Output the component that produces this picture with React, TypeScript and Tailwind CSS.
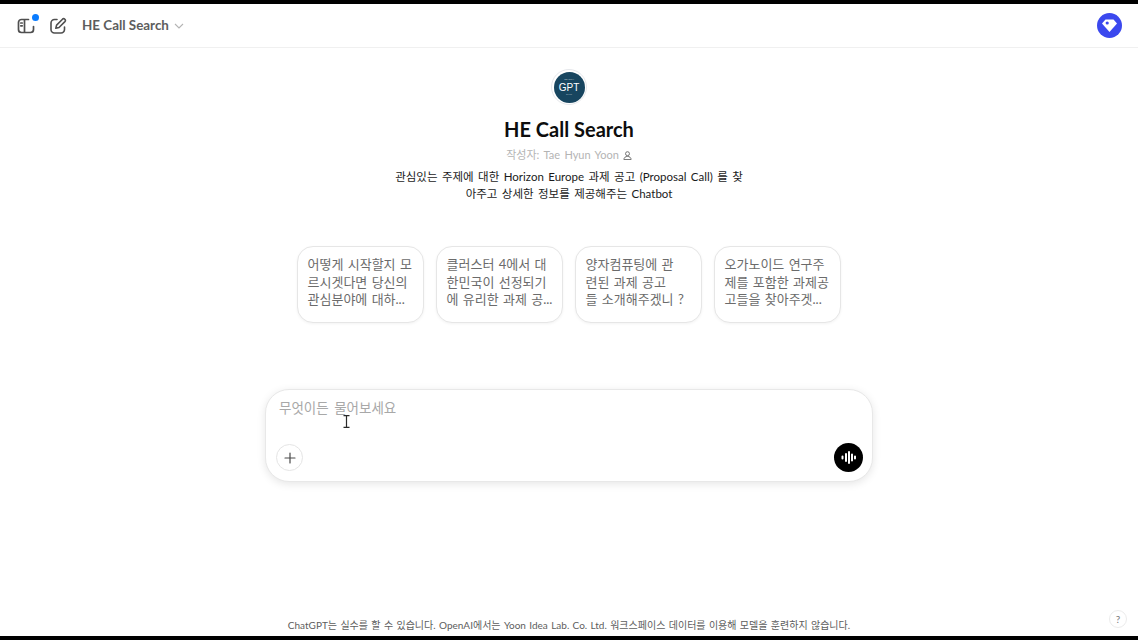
import React from "react";

const font = { fontFamily: 'Lato, "Noto Sans CJK KR", "Noto Sans", sans-serif' };

function SidebarIcon() {
  return (
    <svg width="20" height="20" viewBox="0 0 20 20" fill="none" stroke="#4f4f4f" strokeWidth="1.7" className="block">
      <path d="M12.500 3.500H5.500a3 3 0 0 0-3 3v7a3 3 0 0 0 3 3h9a3 3 0 0 0 3-3v-3" strokeLinecap="round" />
      <path d="M8.500 3.500v13" />
      <path d="M4.800 7h1.400M4.800 9.800h1.400" strokeLinecap="round" />
    </svg>
  );
}

function EditIcon() {
  return (
    <svg width="18" height="18" viewBox="0 0 18 18" fill="none" stroke="#4f4f4f" strokeWidth="1.6" strokeLinecap="round" strokeLinejoin="round" className="block">
      <path d="M8 2.500H5.500A3.500 3.500 0 0 0 2 6v6.500A3.500 3.500 0 0 0 5.500 16H12a3.500 3.500 0 0 0 3.500-3.500V10" />
      <path d="M13.500 2.200a1.700 1.700 0 0 1 2.400 2.400L10 10.500l-3.200.8.8-3.200z" />
    </svg>
  );
}

function Gem() {
  return (
    <div className="w-[25px] h-[25px] rounded-full bg-[#3b48ee] flex items-center justify-center">
      <svg width="17" height="15" viewBox="0 0 17 15">
        <path d="M4.500 1.500h8l3.500 4-7.500 8.500L1 5.500z" fill="#fff" />
        <circle cx="6.200" cy="5" r="1.600" fill="#3b48ee" />
      </svg>
    </div>
  );
}

function Logo() {
  return (
    <div className="w-[36px] h-[36px] rounded-full border border-[#e5e7eb] flex items-center justify-center">
      <div className="w-[31px] h-[31px] rounded-full bg-[#17455f] flex flex-col items-center justify-center text-white">
        <span className="text-[2.5px] leading-[4px] text-[#b9c9d3]">SEARCH</span>
        <span className="text-[10px] leading-[11px]" style={{ fontFamily: '"Liberation Sans", sans-serif' }}>GPT</span>
        <span className="text-[2.5px] leading-[4px] text-[#b9c9d3]">CALL</span>
      </div>
    </div>
  );
}

function Card({ lines }: { lines: string[] }) {
  return (
    <div className="w-[127px] h-[77px] shrink-0 rounded-2xl border border-[#e6e6e6] bg-white shadow-[0_1px_3px_rgba(0,0,0,0.05)] pl-[9.500px] pt-[9px] text-[13px] leading-[17.5px] [word-spacing:1px] text-[#6b6b6b] whitespace-nowrap">
      {lines.map((l) => (
        <div key={l}>{l}</div>
      ))}
    </div>
  );
}

export default function App() {
  return (
    <div className="h-screen w-full flex flex-col bg-white overflow-hidden" style={font}>
      <div className="h-[4px] shrink-0 bg-black" />
      <header className="h-[44px] shrink-0 border-b border-[#f0f0f0] flex items-center pl-[16px] pr-[16px]">
        <div className="relative">
          <SidebarIcon />
          <span className="absolute -top-[2px] right-[-3px] w-[7px] h-[7px] rounded-full bg-[#0a7cff]" />
        </div>
        <div className="ml-[13px]">
          <EditIcon />
        </div>
        <span className="ml-[15px] text-[13.400px] font-bold text-[#5d5d5d]">HE Call Search</span>
        <svg width="10" height="6" viewBox="0 0 10 6" fill="none" stroke="#b4b4b4" strokeWidth="1.1" className="ml-[5px] mt-[1px]">
          <path d="M1 1l4 4 4-4" />
        </svg>
        <div className="ml-auto">
          <Gem />
        </div>
      </header>

      <main className="flex-1 flex flex-col items-center min-h-0">
        <div className="mt-[21px]">
          <Logo />
        </div>
        <h1 className="mt-[11px] text-[20px] leading-[26px] font-bold text-[#0d0d0d]">HE Call Search</h1>
        <div className="mt-[5px] flex items-center gap-[4px] text-[11px] leading-[16px] [word-spacing:1.5px] text-[#b4b4b4]">
          <span>작성자: Tae Hyun Yoon</span>
          <svg width="9" height="9" viewBox="0 0 10 10" fill="none" stroke="#666" strokeWidth="1">
            <circle cx="5" cy="3" r="2.200" />
            <path d="M1 9.500c0-2.200 1.800-3.500 4-3.500s4 1.300 4 3.500z" />
          </svg>
        </div>
        <div className="mt-[5px] w-[360px] text-center text-[11.5px] leading-[17px] [word-spacing:1.5px] text-[#1a1a1a]">
          <div>관심있는 주제에 대한 Horizon Europe 과제 공고 (Proposal Call) 를 찾</div>
          <div>아주고 상세한 정보를 제공해주는 Chatbot</div>
        </div>

        <div className="mt-[44px] flex gap-[12px]">
          <Card lines={["어떻게 시작할지 모", "르시겟다면 당신의", "관심분야에 대하..."]} />
          <Card lines={["클러스터 4에서 대", "한민국이 선정되기", "에 유리한 과제 공..."]} />
          <Card lines={["양자컴퓨팅에 관", "련된 과제 공고", "들 소개해주겠니 ?"]} />
          <Card lines={["오가노이드 연구주", "제를 포함한 과제공", "고들을 찾아주겟..."]} />
        </div>

        <div className="relative mt-[66px] w-[608px] h-[93px] rounded-[24px] border border-[#e8e8e8] bg-white shadow-[0_2px_8px_rgba(0,0,0,0.1)] flex flex-col justify-between pl-[10px] pr-[9px] pt-[8px] pb-[9px]">
          <div className="pl-[3px] text-[13.500px] leading-[20px] [word-spacing:2px] text-[#a8a8a8]">무엇이든 물어보세요</div>
          <svg width="7" height="13" viewBox="0 0 7 13" fill="none" stroke="#2a2a2a" strokeWidth="1.2" className="absolute left-[77px] top-[25px]">
            <path d="M0.500 0.700h6M0.500 12.300h6M3.500 0.700v11.600" />
          </svg>
          <div className="flex items-center justify-between">
            <div className="w-[27px] h-[27px] rounded-full border border-[#e5e5e5] flex items-center justify-center">
              <svg width="12" height="12" viewBox="0 0 12 12" stroke="#4a4a4a" strokeWidth="1.2" strokeLinecap="round">
                <path d="M6 1v10M1 6h10" />
              </svg>
            </div>
            <div className="w-[29px] h-[29px] rounded-full bg-black flex items-center justify-center">
              <svg width="15" height="13" viewBox="0 0 15 13" stroke="#fff" strokeWidth="2" strokeLinecap="round">
                <path d="M1.500 5.500v2M5 3v7M8 1v11M11 3.500v6M14 5.500v2" />
              </svg>
            </div>
          </div>
        </div>

        <div className="mt-auto h-[26px] w-full relative flex items-center justify-center">
          <span className="text-[10px] [word-spacing:0.800px] text-[#5d5d5d] pt-[4px]">
            ChatGPT는 실수를 할 수 있습니다. OpenAI에서는 Yoon Idea Lab. Co. Ltd. 워크스페이스 데이터를 이용해 모델을 훈련하지 않습니다.
          </span>
          <div className="absolute right-[11px] bottom-[8px] w-[18px] h-[18px] rounded-full border border-[#ececec] flex items-center justify-center text-[10px] text-[#7a7a7a]">
            ?
          </div>
        </div>
      </main>
      <div className="h-[4px] shrink-0 bg-black" />
    </div>
  );
}
